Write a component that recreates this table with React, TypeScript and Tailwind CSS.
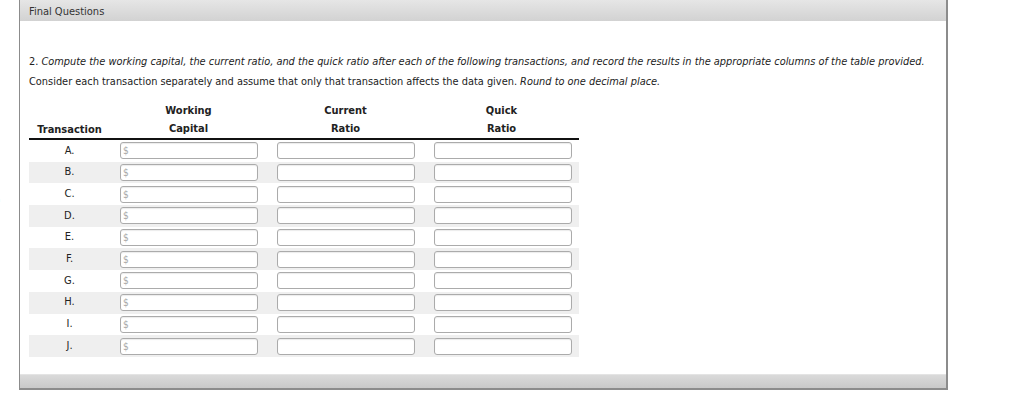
import React from "react";

const rows = ["A.", "B.", "C.", "D.", "E.", "F.", "G.", "H.", "I.", "J."];

const font = { fontFamily: '"DejaVu Sans Condensed", "DejaVu Sans", sans-serif' };

function Field({ prefix }: { prefix?: string }) {
  return (
    <div className="flex h-[17px] w-[138px] items-center rounded-[3px] border border-[#ababab] bg-white pl-[2px] shadow-[inset_0_1px_1px_rgba(0,0,0,0.08)]">
      {prefix && <span className="text-[10px] text-[#a8a8a8]">{prefix}</span>}
    </div>
  );
}

export default function App() {
  return (
    <div className="flex h-[395px] w-[1024px] bg-white text-[#222]" style={font}>
      {/* stray paren from the neighbouring column */}
      <div className="w-[19px] overflow-hidden">
        <div className="-ml-[6px] pt-[190px] text-[20px] leading-none text-[#333]">)</div>
      </div>

      <div className="flex h-[390px] w-[929px] flex-col border-b-2 border-l border-r-2 border-[#8c8c8c]">
        {/* title bar */}
        <div className="h-[21px] bg-gradient-to-b from-[#e6e6e6] to-[#d2d2d2] px-[9px] pt-[5px] text-[11px] leading-[13px] text-[#333]">
          Final Questions
        </div>

        <div className="flex-1 px-[9px] pt-[31px]">
          <p className="text-[10.9px] leading-[20px]">
            2. <i>Compute the working capital, the current ratio, and the quick ratio after each of the following transactions, and record the results in the appropriate columns of the table provided.</i>
          </p>
          <p className="text-[10.9px] leading-[20px]">
            Consider each transaction separately and assume that only that transaction affects the data given. <i>Round to one decimal place.</i>
          </p>

          <div className="mt-[10px] w-[550px]">
            <div className="grid grid-cols-[81px_157px_157px_155px] border-b-2 border-[#111] text-[11px] font-bold">
              <div className="flex items-end justify-center leading-[16px]">Transaction</div>
              <div className="text-center leading-[18px]">Working<br /><span className="leading-[16px]">Capital</span></div>
              <div className="text-center leading-[18px]">Current<br /><span className="leading-[16px]">Ratio</span></div>
              <div className="text-center leading-[18px]">Quick<br /><span className="leading-[16px]">Ratio</span></div>
            </div>
            {rows.map((r, i) => (
              <div
                key={r}
                className={
                  "grid h-[21.7px] grid-cols-[81px_157px_157px_155px] items-center text-[11px] " +
                  (i % 2 === 1 ? "bg-[#efefef]" : "bg-white")
                }
              >
                <div className="text-center">{r}</div>
                <div className="pl-[10px]"><Field prefix="$" /></div>
                <div className="pl-[10px]"><Field /></div>
                <div className="pl-[10px]"><Field /></div>
              </div>
            ))}
          </div>
        </div>

        {/* footer bar */}
        <div className="h-[14px] border-t border-[#e4e4e4] bg-gradient-to-b from-[#dadada] to-[#c9c9c9]" />
      </div>
    </div>
  );
}
